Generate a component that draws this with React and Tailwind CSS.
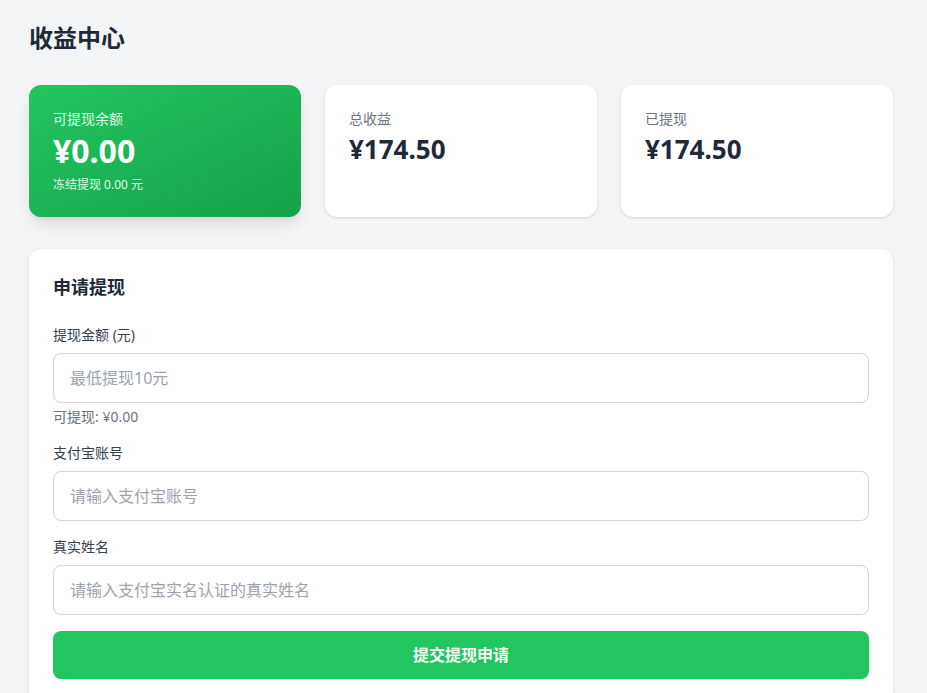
import React from "react";

const font = { fontFamily: '"Noto Sans", "Noto Sans CJK SC", sans-serif' };

const StatCard = ({ label, amount }) => (
  <div className="bg-white rounded-xl shadow-sm p-6">
    <p className="text-sm text-[#6b7280]">{label}</p>
    <p className="mt-1 text-[26px] leading-8 font-bold text-[#1f2937]">{amount}</p>
  </div>
);

const Field = ({ label, placeholder, hint }) => (
  <div>
    <label className="block text-sm text-[#374151] mb-2">{label}</label>
    <input
      type="text"
      placeholder={placeholder}
      className="w-full border border-[#d1d5db] rounded-lg px-4 py-3 text-base text-[#1f2937] placeholder-[#9ca3af] outline-none"
    />
    {hint && <p className="mt-1 text-sm text-[#6b7280]">{hint}</p>}
  </div>
);

const App = () => {
  return (
    <div className="min-h-screen bg-[#f3f4f6] pl-[29px] pt-[22px]" style={font}>
      <div className="w-[864px]">
        <h1 className="text-2xl font-bold text-[#1f2937] mb-[31px]">收益中心</h1>

        <div className="grid grid-cols-3 gap-6 mb-8">
          <div className="rounded-xl p-6 text-white bg-gradient-to-br from-[#22c55e] to-[#16a34a] shadow-lg">
            <p className="text-sm text-[#dcfce7]">可提现余额</p>
            <p className="mt-1 text-[32px] leading-9 font-bold">¥0.00</p>
            <p className="mt-2 text-xs text-[#dcfce7]">冻结提现 0.00 元</p>
          </div>
          <StatCard label="总收益" amount="¥174.50" />
          <StatCard label="已提现" amount="¥174.50" />
        </div>

        <div className="bg-white rounded-xl shadow-sm p-6">
          <h2 className="text-lg font-bold text-[#1f2937] mb-6">申请提现</h2>
          <div className="flex flex-col gap-4">
            <Field label="提现金额 (元)" placeholder="最低提现10元" hint="可提现: ¥0.00" />
            <Field label="支付宝账号" placeholder="请输入支付宝账号" />
            <Field label="真实姓名" placeholder="请输入支付宝实名认证的真实姓名" />
            <button className="w-full bg-[#22c55e] text-white font-bold py-3 rounded-lg text-base">
              提交提现申请
            </button>
          </div>
        </div>
      </div>
    </div>
  );
};

export default App;
